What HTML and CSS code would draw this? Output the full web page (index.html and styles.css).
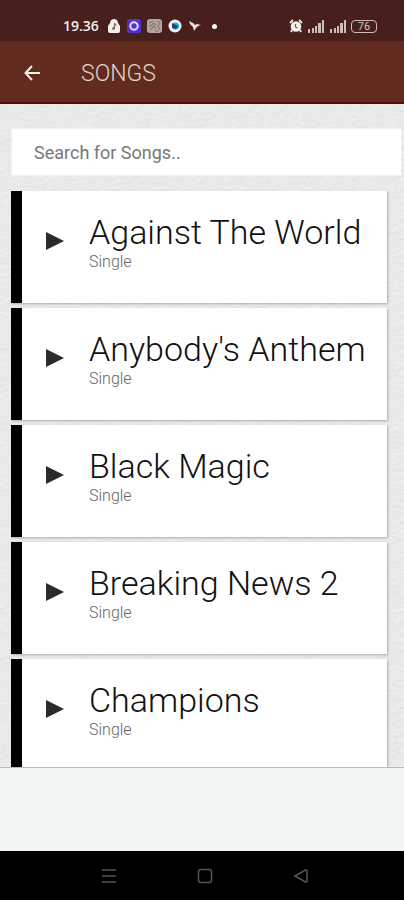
FILE: index.html
```html
<!DOCTYPE html>
<html lang="en">
<head>
<meta charset="utf-8">
<meta name="viewport" content="width=device-width, initial-scale=1">
<title>Songs</title>
<link rel="stylesheet" href="styles.css">
</head>
<body>
<div class="status">
  <div class="status-left">
    <span class="clock">19.36</span>
    <svg width="14" height="16" viewBox="0 0 14 16"><path d="M3 5Q3.500 1 7 1t4 4l2 3v5q0 2-2 2H3q-2 0-2-2V8z" fill="#f5efec"/><path d="M7.500 5v5.500M7.500 5.500q.5 1.500 2 1.500" stroke="#85675f" stroke-width="1.200" fill="none"/><circle cx="6.500" cy="10.500" r="1.300" fill="#75554d"/></svg>
    <svg width="14" height="14" viewBox="0 0 14 14"><rect width="14" height="14" rx="3" fill="#5035cf"/><circle cx="7" cy="7" r="3.700" fill="none" stroke="#e5dcff" stroke-width="2"/></svg>
    <svg width="15" height="14" viewBox="0 0 15 14"><rect width="15" height="14" rx="3" fill="#b4a7a1"/><path d="M2 4l4-2M2 8l5-4 2 2M3 11l4-4 2 3M10 2l3 2-2 3 2 4M8 12h4" stroke="#857770" stroke-width="1.200" fill="none"/></svg>
    <svg width="14" height="14" viewBox="0 0 14 14"><circle cx="7" cy="7" r="6.500" fill="#f2f4f7"/><circle cx="7.500" cy="7" r="3.500" fill="#22add5"/><path d="M4 4l6 3-2 3-4-1z" fill="#164981"/></svg>
    <svg width="14" height="12" viewBox="0 0 14 12"><path d="M1 1l4 2 2 2 2-1 4 1-3 1-2 2-2 3-1-4-3-3z" fill="#eee4df"/></svg>
    <span class="dot"></span>
  </div>
  <div class="status-right">
    <svg width="14" height="14" viewBox="0 0 14 14"><path d="M1 4l3-3M13 4l-3-3M3 11l-1 2M11 11l1 2" stroke="#ebe0dc" stroke-width="2"/><circle cx="7" cy="7.500" r="5.300" fill="#f5eeeb"/><path d="M6.500 5v3l2 1" stroke="#774f45" stroke-width="1.200" fill="none"/></svg>
    <svg width="18" height="13" viewBox="0 0 18 13"><path d="M1 9h2v4H1zM5 8h2v5H5zM8 6h2v7H8zM11 3h3v10h-3zM15 0h2v13h-2z" fill="#cfbdb6"/></svg>
    <svg width="18" height="13" viewBox="0 0 18 13"><path d="M1 9h2v4H1zM5 8h2v5H5zM8 6h2v7H8zM11 3h3v10h-3zM15 0h2v13h-2z" fill="#cfbdb6"/></svg>
    <span class="battery">76</span>
  </div>
</div>
<header class="appbar">
  <button class="back" aria-label="Back"><svg width="16" height="16" viewBox="0 0 16 16"><path d="M8 1L1.500 8 8 15M2 8h14" stroke="#f4eeeb" stroke-width="2" fill="none"/></svg></button>
  <h1>SONGS</h1>
</header>
<main class="content">
  <svg class="paper" aria-hidden="true"><filter id="grain" x="0" y="0" width="100%" height="100%"><feTurbulence type="fractalNoise" baseFrequency="0.15 0.3" numOctaves="3" seed="4" result="n"/><feDiffuseLighting in="n" surfaceScale="0.25" diffuseConstant="1.1" lighting-color="#ebebeb"><feDistantLight azimuth="60" elevation="63"/></feDiffuseLighting></filter><rect width="100%" height="100%" filter="url(#grain)"/></svg>
  <input class="search" type="text" aria-label="Search for Songs" placeholder="Search for Songs..">
  <ul class="songs">
    <li class="song"><button class="play" aria-label="Play Against The World"><svg width="18" height="18" viewBox="0 0 18 18"><path d="M0 0l18 9-18 9z"/></svg></button><div><h2>Against The World</h2><p>Single</p></div></li>
    <li class="song"><button class="play" aria-label="Play Anybody's Anthem"><svg width="18" height="18" viewBox="0 0 18 18"><path d="M0 0l18 9-18 9z"/></svg></button><div><h2>Anybody's Anthem</h2><p>Single</p></div></li>
    <li class="song"><button class="play" aria-label="Play Black Magic"><svg width="18" height="18" viewBox="0 0 18 18"><path d="M0 0l18 9-18 9z"/></svg></button><div><h2>Black Magic</h2><p>Single</p></div></li>
    <li class="song"><button class="play" aria-label="Play Breaking News 2"><svg width="18" height="18" viewBox="0 0 18 18"><path d="M0 0l18 9-18 9z"/></svg></button><div><h2>Breaking News 2</h2><p>Single</p></div></li>
    <li class="song"><button class="play" aria-label="Play Champions"><svg width="18" height="18" viewBox="0 0 18 18"><path d="M0 0l18 9-18 9z"/></svg></button><div><h2>Champions</h2><p>Single</p></div></li>
  </ul>
</main>
<div class="banner"></div>
<nav class="sysnav">
  <button aria-label="Recent apps"><svg width="16" height="16" viewBox="0 0 16 16"><path d="M1 2h14M1 8h14M1 14h14"/></svg></button>
  <button aria-label="Home"><svg width="16" height="16" viewBox="0 0 16 16"><rect x="1.500" y="1.500" width="13" height="13" rx="2.500"/></svg></button>
  <button aria-label="Back"><svg width="16" height="16" viewBox="0 0 16 16"><path d="M2 8l10.500-6q1.500-.5 1.500 1v10q0 1.500-1.500 1z"/></svg></button>
</nav>
</body>
</html>
```

FILE: styles.css
```css
* { box-sizing: border-box; }
body {
  margin: 0;
  height: 100vh;
  display: flex;
  flex-direction: column;
  overflow: hidden;
  font-family: Roboto, "Liberation Sans", sans-serif;
  background: #e6e6e6;
}
svg { display: block; flex: none; }
button { border: 0; padding: 0; background: none; }
h1, h2, p, ul { margin: 0; padding: 0; }

.status {
  flex: none;
  display: flex;
  justify-content: space-between;
  padding: 12px 27px 0 63px;
  height: 41px;
  background: #47201b;
  color: #f5eeeb;
}
.status-left, .status-right { display: flex; align-items: center; height: 28px; }
.status-left { gap: 6px; }
.status-right { gap: 4px; }
.clock {
  margin-right: 2px;
  font: 600 14px/16px "Open Sans", sans-serif;
}
.dot { width: 5px; height: 5px; margin-left: 4px; border-radius: 50%; background: #fff; }
.battery {
  width: 26px;
  height: 13px;
  border: 1px solid #cfbdb6;
  border-radius: 4px;
  color: #d5c5bf;
  font-size: 11px;
  line-height: 11px;
  text-align: center;
}

.appbar {
  flex: none;
  display: flex;
  align-items: center;
  height: 63px;
  padding: 2px 0 0 24px;
  background: #612b1e;
  border-bottom: 2px solid #570c08;
}
.back { width: 16px; margin-right: 41px; }
h1 { padding-top: 2px; color: #dfd2cc; font-size: 23px; font-weight: 300; line-height: 28px; }

.content {
  position: relative;
  flex: 1;
  min-height: 0;
  overflow: hidden;
  padding: 24px 2px 0 11px;
}
.paper { position: absolute; inset: 0; width: 100%; height: 100%; }
.search {
  position: relative;
  display: block;
  width: 100%;
  height: 48px;
  padding: 0 22px;
  border: 1px solid #f0f0f0;
  background: #fff;
  font: 400 18px/24px Roboto, "Liberation Sans", sans-serif;
}
.search::placeholder { color: #777; }
.songs {
  position: relative;
  display: flex;
  flex-direction: column;
  gap: 5px;
  margin: 15px 15px 0 0;
  list-style: none;
}
.song {
  display: flex;
  height: 112px;
  padding: 21px 0 0 24px;
  border-left: 11px solid #000;
  background: #fff;
  box-shadow: 1px 1px 2px #aaa;
}
.play { width: 18px; height: 18px; margin: 20px 25px 0 0; color: #2b2b2b; }
.play svg { fill: currentColor; }
h2 { color: #111; font-size: 34px; font-weight: 300; line-height: 40px; white-space: nowrap; }
.song p { color: #666; font-size: 16px; font-weight: 300; line-height: 20px; }

.banner { flex: none; height: 84px; border-top: 1px solid #bbb; background: #f0f6f5; }
.sysnav {
  flex: none;
  display: flex;
  justify-content: center;
  gap: 80px;
  height: 49px;
  padding-left: 5px;
  background: #000;
}
.sysnav svg { fill: none; stroke: #555; stroke-width: 1.500; }
```
